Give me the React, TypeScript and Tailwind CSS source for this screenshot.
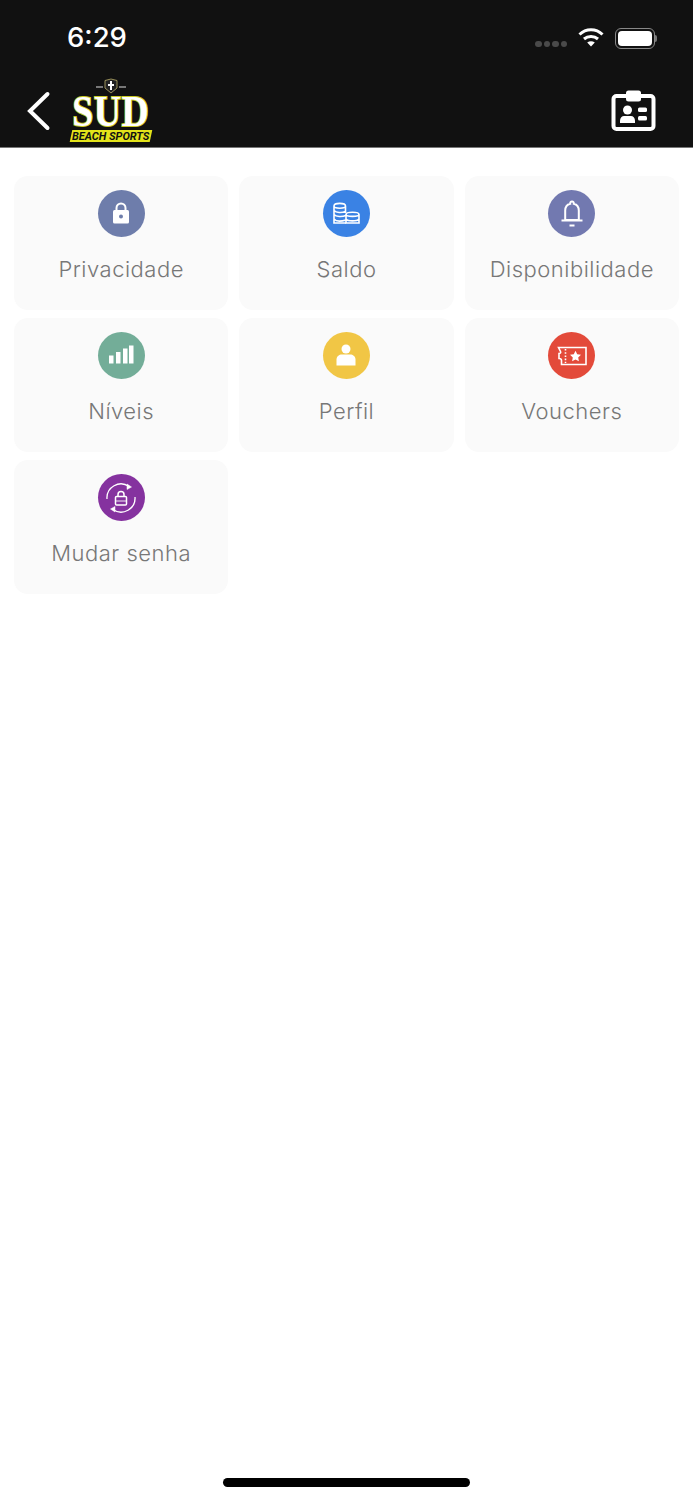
import { ReactNode } from "react";

interface MenuItem {
  label: string;
  color: string;
  icon: ReactNode;
}

const items: MenuItem[] = [
  {
    label: "Privacidade",
    color: "bg-[#6e7dab]",
    icon: (
      <svg width="28" height="28" viewBox="0 0 28 28" fill="none">
        <path d="M9.5 11V8a4.5 4.5 0 0 1 9 0v3" stroke="white" strokeWidth="2" />
        <rect x="6" y="10" width="16" height="13.5" rx="1.5" fill="white" />
        <circle cx="14" cy="16.5" r="2" fill="#6e7dab" />
      </svg>
    ),
  },
  {
    label: "Saldo",
    color: "bg-[#3a82e4]",
    icon: (
      <svg width="28" height="28" viewBox="0 0 28 28" fill="none" stroke="white" strokeWidth="1.6">
        <path d="M2 6C2 2.5 13.5 2.5 13.5 6M2 6V23H14M2 6C2 9 13.5 9 13.5 6V13M2 10.5C4 13 10 13 13.5 11.5M2 14.5C4 17 10 17 14 15.5M2 19C4 21.5 9 21.5 14 20" />
        <path d="M14 14.5C14 11.5 27 11.5 27 14.5V23H14V14.5ZM14 14.5C14 17 27 17 27 14.5M14 19C16 21.5 25 21.5 27 19" />
      </svg>
    ),
  },
  {
    label: "Disponibilidade",
    color: "bg-[#7279b0]",
    icon: (
      <svg width="28" height="28" viewBox="0 0 28 28" fill="none" stroke="white" strokeWidth="2">
        <path d="M14 1.5a1.8 1.8 0 0 1 1.8 2.2C19 4.6 20.8 7 20.8 10.5v9.5H7.2v-9.5C7.2 7 9 4.6 12.2 3.7A1.8 1.8 0 0 1 14 1.5Z" />
        <path d="M3.5 20.5h21M11.5 25.5h5" />
      </svg>
    ),
  },
  {
    label: "Níveis",
    color: "bg-[#73ad98]",
    icon: (
      <svg width="28" height="28" viewBox="0 0 28 28" fill="white">
        <rect x="2" y="13.5" width="4.5" height="8" />
        <rect x="9" y="10" width="4.5" height="11.5" />
        <rect x="16" y="6.5" width="4.5" height="15" />
        <rect x="22" y="3.5" width="4.5" height="18" />
      </svg>
    ),
  },
  {
    label: "Perfil",
    color: "bg-[#f1c645]",
    icon: (
      <svg width="28" height="28" viewBox="0 0 28 28" fill="white">
        <circle cx="14" cy="7" r="4.5" />
        <path d="M4.5 23.5V17.5C4.5 14.5 7 12.5 10 12.5H18C21 12.5 23.5 14.5 23.5 17.5V23.5Z" />
      </svg>
    ),
  },
  {
    label: "Vouchers",
    color: "bg-[#e34a3a]",
    icon: (
      <svg width="34" height="28" viewBox="0 0 34 28" fill="none" stroke="white" strokeWidth="1.6">
        <path d="M3.5 5.5H31V22.5H6.5V18.5C6.5 17 5.5 16.5 4 16.5V11.5C5.5 11.5 6 10.5 5.5 9.5Z" />
        <path d="M10.5 7v14" strokeDasharray="1.6 1.6" />
        <path
          d="M20.5 8.8l1.7 3.5 3.8.5-2.8 2.6.7 3.8-3.4-1.8-3.4 1.8.7-3.8-2.8-2.6 3.8-.5Z"
          fill="white"
          stroke="none"
        />
      </svg>
    ),
  },
  {
    label: "Mudar senha",
    color: "bg-[#85329f]",
    icon: (
      <svg width="34" height="34" viewBox="0 0 34 34" fill="none" stroke="white" strokeWidth="1.3">
        <path d="M25 5.5A14 14 0 0 0 3 18" />
        <path d="M9 28.5A14 14 0 0 0 31 16" />
        <path d="M23 3l4.5 3-4.5 2.5Z" fill="white" strokeWidth="0.5" />
        <path d="M11 31l-4.5-3 4.5-2.5Z" fill="white" strokeWidth="0.5" />
        <rect x="11.5" y="15.5" width="11" height="8.5" rx="1" strokeWidth="1.5" />
        <path d="M14 15.5v-2a3 3 0 0 1 6 0v2" strokeWidth="1.5" />
        <path d="M12 20h10" strokeWidth="0.9" />
      </svg>
    ),
  },
];

function SudLogo() {
  return (
    <div className="flex flex-col items-center w-[84px] ml-[17px] mt-[2px]">
      <svg width="32" height="16" viewBox="0 0 32 16" fill="none">
        <path d="M10 2.5L16 1 22 2.5V10L16 15 10 10Z" fill="#222" stroke="#b9ad6a" strokeWidth="0.8" />
        <path d="M16 3V12M13 7H19" stroke="white" strokeWidth="2" />
        <path d="M1 9H8M24 9H31" stroke="#999" strokeWidth="1.5" />
      </svg>
      <span className="font-['Liberation_Serif',serif] font-bold text-white text-[45px] leading-[34px] tracking-[0.5px] scale-x-[0.84] [-webkit-text-stroke:2px_#c9c926] [paint-order:stroke_fill]">
        SUD
      </span>
      <div className="w-[80px] h-[12px] mt-[2px] bg-[#e3e31a] -skew-x-12 flex items-center justify-center">
        <span className="font-['Roboto',sans-serif] font-bold italic text-[#111] text-[11px] leading-none skew-x-12 whitespace-nowrap">
          BEACH SPORTS
        </span>
      </div>
    </div>
  );
}

export default function App() {
  return (
    <div className="relative h-[1500px] w-[693px] bg-white overflow-hidden font-['Inter',sans-serif]">
      {/* Header */}
      <header className="h-[148px] bg-[#111111] border-b border-[#777] flex flex-col">
        <div className="h-[76px] flex items-center pl-[67px] pr-[36px] justify-between">
          <span className="text-white text-[27.5px] font-medium leading-none">6:29</span>
          <div className="flex items-center gap-[11px]">
            <div className="flex gap-[2px] mt-[12px]">
              <span className="w-[6.5px] h-[6px] rounded-full bg-[#4a4a4a]" />
              <span className="w-[6.5px] h-[6px] rounded-full bg-[#4a4a4a]" />
              <span className="w-[6.5px] h-[6px] rounded-full bg-[#4a4a4a]" />
              <span className="w-[6.5px] h-[6px] rounded-full bg-[#4a4a4a]" />
            </div>
            <svg width="26" height="20" viewBox="0 0 26 20" fill="none" stroke="white" strokeWidth="3" className="-mt-[2px]">
              <path d="M1.5 7.5C8 1 18 1 24.5 7.5" />
              <path d="M6 12C10 8.5 16 8.5 20 12" />
              <path d="M13 19.5L9.2 15.5C11.5 13.7 14.5 13.7 16.8 15.5Z" fill="white" stroke="none" />
            </svg>
            <div className="flex items-center">
              <div className="w-[40px] h-[21px] rounded-[6px] border border-[#888] p-[2px]">
                <div className="w-full h-full rounded-[4px] bg-white" />
              </div>
              <span className="w-[2px] h-[7px] bg-[#777] rounded-r" />
            </div>
          </div>
        </div>
        <div className="flex-1 flex items-start pl-[26px] pr-[36px] justify-between">
          <div className="flex items-start">
            <svg width="26" height="40" viewBox="0 0 26 40" fill="none" stroke="white" strokeWidth="4" strokeLinecap="round" className="mt-[15px]">
              <path d="M21.5 3L4 20l17.5 17" />
            </svg>
            <SudLogo />
          </div>
          <svg width="46" height="42" viewBox="0 0 46 42" fill="none" className="mt-[14px]">
            <rect x="2.5" y="6" width="40" height="33" rx="3" stroke="white" strokeWidth="4" />
            <rect x="15" y="0.5" width="15" height="11" rx="2.5" fill="white" />
            <circle cx="16.5" cy="20" r="4.5" fill="white" />
            <path d="M9 33V30.5C9 28 11 26 13 26H20C22 26 24 28 24 30.5V33Z" fill="white" />
            <rect x="27" y="17.5" width="9" height="4.5" rx="1.5" fill="white" />
            <rect x="27" y="26" width="9" height="4.5" rx="1.5" fill="white" />
          </svg>
        </div>
      </header>

      {/* Menu grid */}
      <main className="grid grid-cols-3 gap-x-[11px] gap-y-[8.5px] px-[14px] pt-[28px]">
        {items.map((item) => (
          <div key={item.label} className="h-[133.5px] rounded-[14px] bg-[#fafafa] flex flex-col items-center pt-[14px]">
            <div className={`w-[47px] h-[47px] rounded-full flex items-center justify-center ${item.color}`}>
              <div className="flex">{item.icon}</div>
            </div>
            <span className="mt-[18px] text-[22px] leading-[28px] font-light text-[#777] tracking-[0.5px]">
              {item.label}
            </span>
          </div>
        ))}
      </main>

      {/* Home indicator */}
      <div className="absolute bottom-[13px] left-[223px] w-[247px] h-[9px] rounded-full bg-black" />
    </div>
  );
}
